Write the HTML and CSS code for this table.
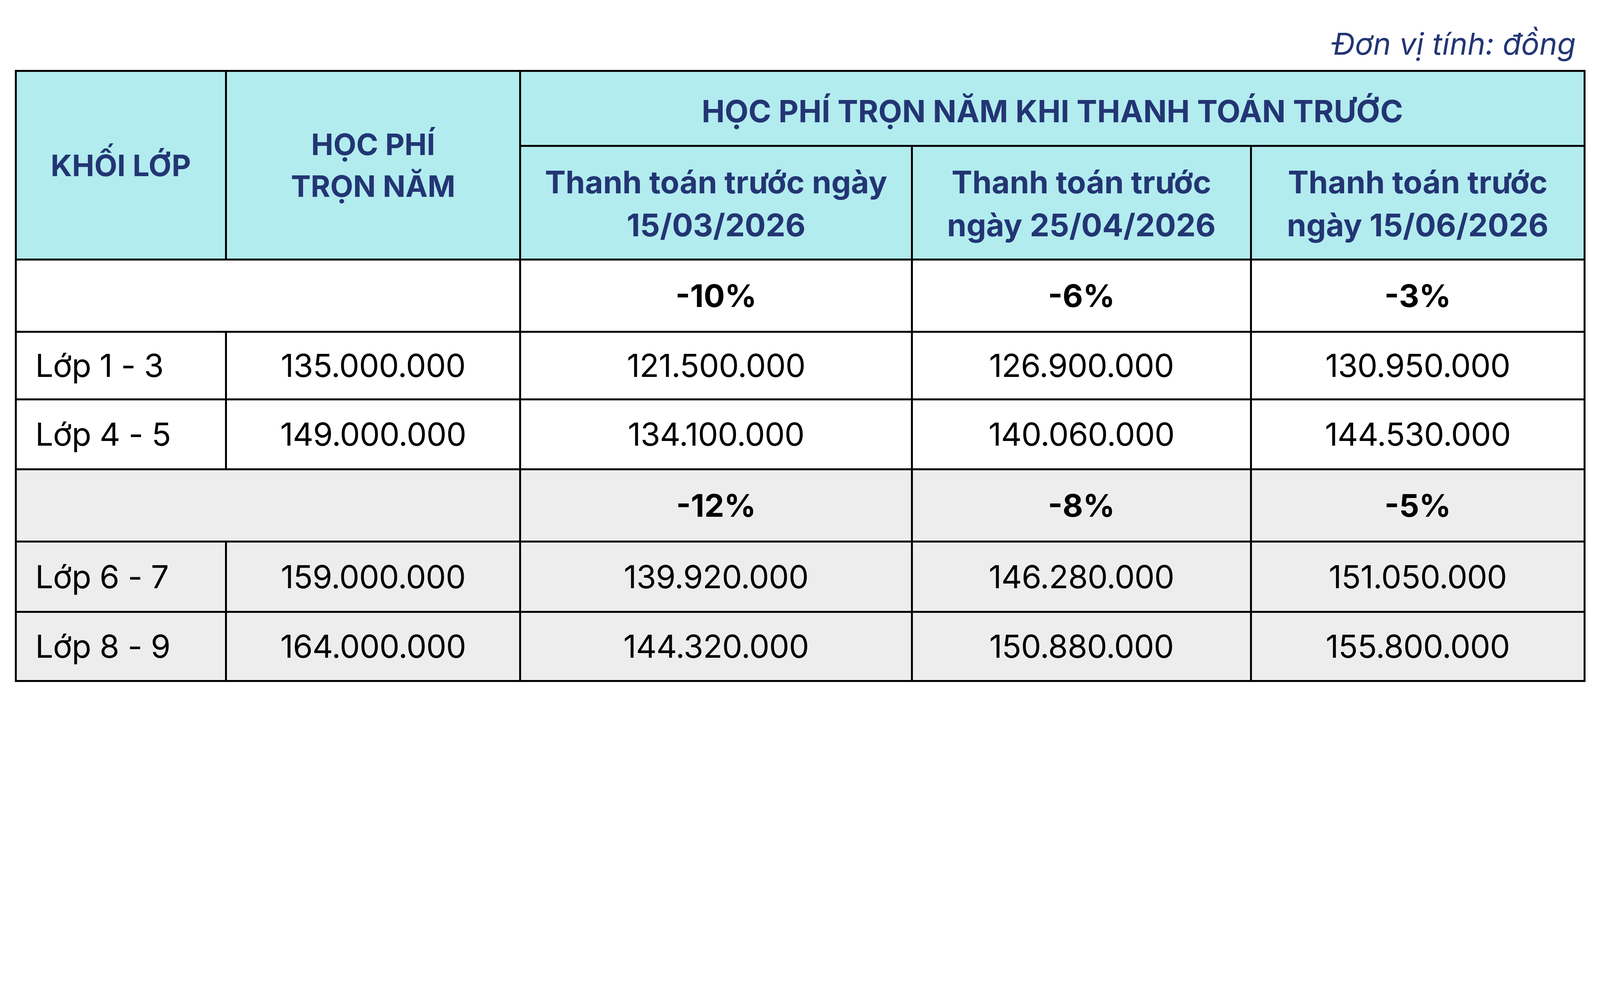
FILE: index.html
```html
<!DOCTYPE html>
<html lang="vi">
<head>
<meta charset="utf-8">
<title>Học phí trọn năm</title>
<link rel="stylesheet" href="styles.css">
</head>
<body>
<div class="sheet">
  <p class="unit">Đơn vị tính: đồng</p>
  <table class="fees">
    <colgroup>
      <col class="c-grade">
      <col class="c-full">
      <col class="c-d1">
      <col class="c-d2">
      <col class="c-d3">
    </colgroup>
    <thead>
      <tr class="h-top">
        <th rowspan="2">KHỐI LỚP</th>
        <th rowspan="2">HỌC PHÍ<br>TRỌN NĂM</th>
        <th colspan="3" class="span-head">HỌC PHÍ TRỌN NĂM KHI THANH TOÁN TRƯỚC</th>
      </tr>
      <tr class="h-sub">
        <th>Thanh toán trước ngày<br>15/03/2026</th>
        <th>Thanh toán trước<br>ngày 25/04/2026</th>
        <th>Thanh toán trước<br>ngày 15/06/2026</th>
      </tr>
    </thead>
    <tbody class="group">
      <tr class="pct pct-1">
        <td colspan="2"></td>
        <td>-10%</td>
        <td>-6%</td>
        <td>-3%</td>
      </tr>
      <tr class="row-1">
        <td class="grade">Lớp 1 - 3</td>
        <td>135.000.000</td>
        <td>121.500.000</td>
        <td>126.900.000</td>
        <td>130.950.000</td>
      </tr>
      <tr class="row-2">
        <td class="grade">Lớp 4 - 5</td>
        <td>149.000.000</td>
        <td>134.100.000</td>
        <td>140.060.000</td>
        <td>144.530.000</td>
      </tr>
    </tbody>
    <tbody class="group alt">
      <tr class="pct pct-2">
        <td colspan="2"></td>
        <td>-12%</td>
        <td>-8%</td>
        <td>-5%</td>
      </tr>
      <tr class="row-4">
        <td class="grade">Lớp 6 - 7</td>
        <td>159.000.000</td>
        <td>139.920.000</td>
        <td>146.280.000</td>
        <td>151.050.000</td>
      </tr>
      <tr class="row-5">
        <td class="grade">Lớp 8 - 9</td>
        <td>164.000.000</td>
        <td>144.320.000</td>
        <td>150.880.000</td>
        <td>155.800.000</td>
      </tr>
    </tbody>
  </table>
</div>
</body>
</html>
```

FILE: styles.css
```css
html, body {
  margin: 0;
  padding: 0;
  background: #ffffff;
}

body {
  font-family: Inter, "Noto Sans", "Liberation Sans", sans-serif;
}

.sheet {
  width: 4021.35px;
  padding: 66.84px 0 0 37.69px;
}

.unit {
  margin: 0 0 22.04px;
  padding-right: 25px;
  text-align: right;
  font-style: italic;
  font-weight: 400;
  font-size: 77.5px;
  line-height: 90.31px;
  color: #233573;
}

.fees {
  width: 4021.35px;
  table-layout: fixed;
  border-collapse: separate;
  border-spacing: 0;
  border-top: 5.7px solid #000;
  border-left: 5.7px solid #000;
}

.fees col { box-sizing: border-box; }
.c-grade { width: 538.31px; }
.c-full  { width: 753.07px; }
.c-d1    { width: 1002.67px; }
.c-d2    { width: 867.56px; }
.c-d3    { width: 854.04px; }

.fees th,
.fees td {
  box-sizing: border-box;
  padding: 0;
  border-right: 5.7px solid #000;
  border-bottom: 5.7px solid #000;
  text-align: center;
  vertical-align: middle;
}

.fees th {
  background: #b2ecef;
  color: #233573;
  font-weight: 700;
  font-size: 76.09px;
  line-height: 106.67px;
}

.fees th.span-head {
  font-size: 78.93px;
  padding-top: 15.6px;
}

.fees .h-sub th {
  font-size: 79.64px;
  line-height: 110.22px;
  padding-top: 4.3px;
}

.fees td {
  color: #000;
  font-weight: 400;
  font-size: 81.78px;
  line-height: 100px;
  letter-spacing: -0.01em;
}

.fees td.grade {
  text-align: left;
  padding-left: 47.64px;
}

.fees .pct td {
  font-weight: 700;
  font-size: 80.36px;
  letter-spacing: 0;
}

.alt td {
  background: #ededed;
}

.h-top { height: 192px; }
.h-sub { height: 290.84px; }
.pct-1 { height: 184.89px; }
.row-1 { height: 173.51px; }
.row-2 { height: 178.49px; }
.pct-2 { height: 185.6px; }
.row-4 { height: 179.91px; }
.row-5 { height: 176.36px; }
```
